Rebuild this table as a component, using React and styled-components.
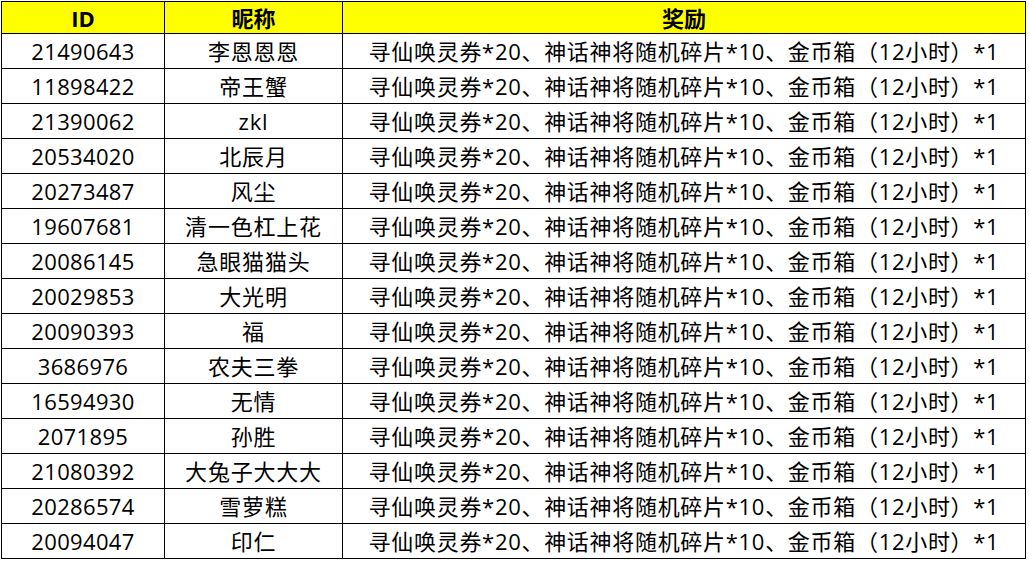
import React from "react";
import styled, { createGlobalStyle } from "styled-components";

const Global = createGlobalStyle`
  html, body { margin: 0; padding: 0; background: #ffffff; }
  body { font-family: "Open Sans", "Noto Sans CJK SC", sans-serif; color: #000; }
`;

const Page = styled.div`
  padding: 1px 0 0 1px;
`;

const Grid = styled.div`
  display: grid;
  grid-template-columns: 163px 178px 683px;
  width: 1025px;
  border-left: 1px solid #000;
  border-top: 1px solid #000;
  box-sizing: border-box;
`;

const Cell = styled.div`
  box-sizing: border-box;
  height: ${(p) => (p.$head ? 32 : 35)}px;
  border-right: 1px solid #000;
  border-bottom: 1px solid #000;
  background: ${(p) => (p.$head ? "#ffff00" : "#ffffff")};
  display: flex;
  align-items: center;
  justify-content: center;
  font-family: "Open Sans", "Noto Sans CJK SC", sans-serif;
  font-size: 22px;
  font-weight: ${(p) => (p.$head ? 700 : 400)};
  letter-spacing: ${(p) => p.$spacing || 0}px;
  line-height: 1;
  white-space: nowrap;
  overflow: hidden;
`;

const reward = "寻仙唤灵券*20、神话神将随机碎片*10、金币箱（12小时）*1";

const rows = [
  ["21490643", "李恩恩恩"],
  ["11898422", "帝王蟹"],
  ["21390062", "zkl"],
  ["20534020", "北辰月"],
  ["20273487", "风尘"],
  ["19607681", "清一色杠上花"],
  ["20086145", "急眼猫猫头"],
  ["20029853", "大光明"],
  ["20090393", "福"],
  ["3686976", "农夫三拳"],
  ["16594930", "无情"],
  ["2071895", "孙胜"],
  ["21080392", "大兔子大大大"],
  ["20286574", "雪萝糕"],
  ["20094047", "印仁"],
];

export default function App() {
  return (
    <>
      <Global />
      <Page>
        <Grid>
          <Cell $head>ID</Cell>
          <Cell $head>昵称</Cell>
          <Cell $head>奖励</Cell>
          {rows.map(([id, name]) => (
            <React.Fragment key={id}>
              <Cell $spacing={0.35}>{id}</Cell>
              <Cell $spacing={0.8}>{name}</Cell>
              <Cell $spacing={0.7}>{reward}</Cell>
            </React.Fragment>
          ))}
        </Grid>
      </Page>
    </>
  );
}
